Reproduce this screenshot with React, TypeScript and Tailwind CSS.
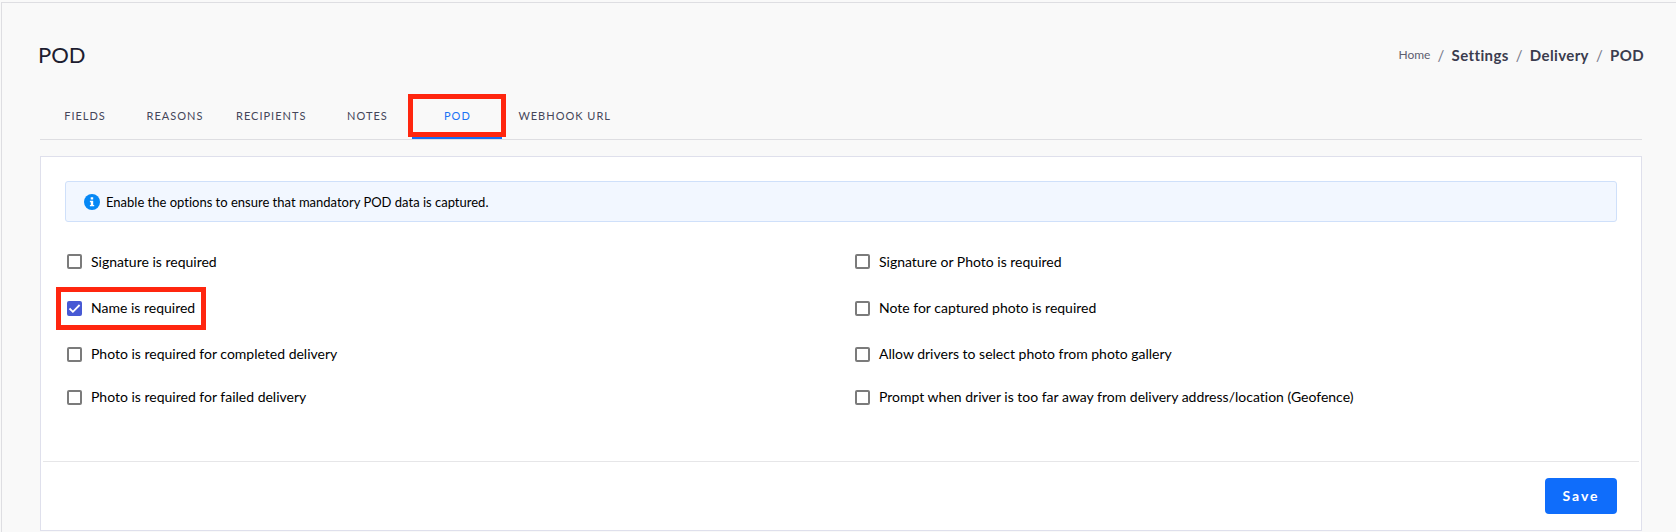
import React, { useState } from "react"
import clsx from "clsx"

const TABS = ["Fields", "Reasons", "Recipients", "Notes", "POD", "Webhook URL"]

const OPTION_ROWS = [
  {
    height: "h-[47px]",
    items: [
      { id: "signature", label: "Signature is required" },
      { id: "signatureOrPhoto", label: "Signature or Photo is required" },
    ],
  },
  {
    height: "h-[46px]",
    items: [
      { id: "name", label: "Name is required", highlighted: true },
      { id: "photoNote", label: "Note for captured photo is required" },
    ],
  },
  {
    height: "h-[46px]",
    items: [
      { id: "photoCompleted", label: "Photo is required for completed delivery" },
      { id: "gallery", label: "Allow drivers to select photo from photo gallery" },
    ],
  },
  {
    height: "h-10",
    items: [
      { id: "photoFailed", label: "Photo is required for failed delivery" },
      { id: "geofence", label: "Prompt when driver is too far away from delivery address/location (Geofence)" },
    ],
  },
]

interface CheckOptionProps {
  id: string
  label: string
  checked: boolean
  highlighted?: boolean
  onToggle: () => void
}

function CheckOption({ id, label, checked, highlighted, onToggle }: CheckOptionProps) {
  return (
    <div className="flex items-center pl-[2px]">
      <div className="relative flex items-center gap-[9px]">
        <span className="grid">
          <input
            id={id}
            type="checkbox"
            checked={checked}
            onChange={onToggle}
            className="col-start-1 row-start-1 size-[15px] appearance-none rounded-[2px] border-2 border-[#7b7b7b] bg-white checked:border-[#4759d4] checked:bg-[#4759d4]"
          />
          {checked && (
            <svg viewBox="0 0 15 15" className="pointer-events-none col-start-1 row-start-1 size-[15px]" fill="none">
              <path d="M2.5 7.5 L5.9 10.8 L12.6 4" stroke="white" strokeWidth="1.8" />
            </svg>
          )}
        </span>
        <label htmlFor={id} className="text-sm leading-5 text-black">{label}</label>
        {highlighted && (
          <span className="pointer-events-none absolute -inset-x-[11px] -top-[11px] -bottom-3 border-[5px] border-[#ff260f]" />
        )}
      </div>
    </div>
  )
}

function InfoIcon() {
  return (
    <svg viewBox="0 0 16 16" className="size-4 shrink-0">
      <circle cx="8" cy="8" r="8" fill="#0688f5" />
      <path d="M6.7 3.2h2.5v2.3H6.7zM5.9 6.8h3.3v4.1h1v1.4H5.9v-1.4h.9V8.2h-.9z" fill="white" />
    </svg>
  )
}

export default function App() {
  const [activeTab, setActiveTab] = useState("POD")
  const [checked, setChecked] = useState<Record<string, boolean>>({ name: true })

  return (
    <div className="bg-[#f9f9f9] pt-[2px] pl-px font-['Lato',sans-serif] [font-variant-ligatures:none]">
      <div className="min-h-[530px] border-t border-l border-[#dedee2] pr-8 pb-px pl-9">
        <header className="flex h-[104px] items-center justify-between">
          <h1 className="text-[22px] leading-7 text-[#1d1d30]">POD</h1>
          <nav aria-label="Breadcrumb">
            <ol className="flex items-center gap-[7px] text-[15px] leading-5 font-bold tracking-wide text-[#3b3c4e]">
              <li className="flex"><a href="#home" className="text-xs font-normal tracking-normal text-[#5d5e70]">Home</a></li>
              <li className="font-normal text-[#77788a]" aria-hidden="true">/</li>
              <li><a href="#settings">Settings</a></li>
              <li className="font-normal text-[#77788a]" aria-hidden="true">/</li>
              <li><a href="#delivery">Delivery</a></li>
              <li className="font-normal text-[#77788a]" aria-hidden="true">/</li>
              <li aria-current="page">POD</li>
            </ol>
          </nav>
        </header>

        <div role="tablist" className="mx-[2px] -mt-[9px] flex border-b border-[#dedee2]">
          {TABS.map((tab) => (
            <button
              key={tab}
              type="button"
              role="tab"
              aria-selected={tab === activeTab}
              onClick={() => setActiveTab(tab)}
              className={clsx(
                "relative h-[41px] min-w-[90px] px-4 pb-1 text-[11px] tracking-[1px] uppercase",
                tab === activeTab ? "text-[#1a73f5]" : "text-[#45465a]"
              )}
            >
              {tab}
              {tab === activeTab && <span className="absolute inset-x-0 bottom-0 h-[3px] bg-[#176df3]" />}
              {tab === "POD" && (
                <span className="pointer-events-none absolute -inset-x-1 -top-[4px] bottom-[2px] border-[5px] border-[#ff260f]" />
              )}
            </button>
          ))}
        </div>

        <form onSubmit={(e) => e.preventDefault()} className="mx-[2px] mt-4 border border-[#dfe0ec] bg-white">
          <div className="px-6 pt-6 pb-11">
            <div className="flex h-[41px] items-center gap-[6px] rounded-[3px] border border-[#cfe0fa] bg-[#f2f7ff] px-[18px]">
              <InfoIcon />
              <p className="text-[13px] leading-5 text-black">
                Enable the options to ensure that mandatory POD data is captured.
              </p>
            </div>

            <div className="mt-4">
              {OPTION_ROWS.map((row) => (
                <div key={row.items[0].id} className={clsx("grid grid-cols-2 gap-6", row.height)}>
                  {row.items.map((item) => (
                    <CheckOption
                      key={item.id}
                      {...item}
                      checked={!!checked[item.id]}
                      onToggle={() => setChecked({ ...checked, [item.id]: !checked[item.id] })}
                    />
                  ))}
                </div>
              ))}
            </div>
          </div>

          <div className="mx-[2px] flex justify-end border-t border-[#e6e6e8] px-[22px] py-4">
            <button type="submit" className="h-9 w-[72px] rounded bg-[#0f6dfb] text-sm font-bold tracking-[2px] text-white">
              Save
            </button>
          </div>
        </form>
      </div>
    </div>
  )
}
